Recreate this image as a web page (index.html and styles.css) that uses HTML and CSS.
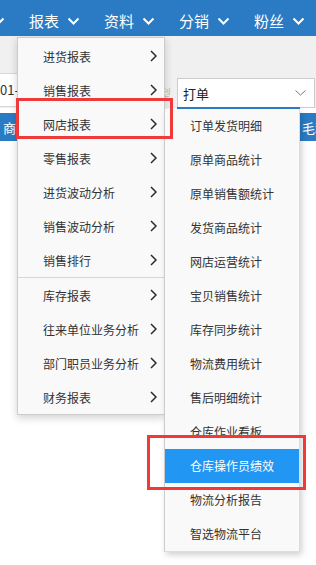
FILE: index.html
```html
<!DOCTYPE html>
<html lang="zh-CN">
<head>
    <meta charset="UTF-8">
    <meta name="viewport" content="width=device-width, initial-scale=1.0">
    <title>报表</title>
    <link rel="stylesheet" href="styles.css">
</head>
<body>

<!-- Top navigation -->
<div class="topbar">
    <ul class="nav">
        <li class="nav-item">统计<svg width="13" height="8" viewBox="0 0 13 8"><polyline points="1.5,1.5 6.5,6.5 11.5,1.5" /></svg></li>
        <li class="nav-item">报表<svg width="13" height="8" viewBox="0 0 13 8"><polyline points="1.5,1.5 6.5,6.5 11.5,1.5" /></svg></li>
        <li class="nav-item">资料<svg width="13" height="8" viewBox="0 0 13 8"><polyline points="1.5,1.5 6.5,6.5 11.5,1.5" /></svg></li>
        <li class="nav-item">分销<svg width="13" height="8" viewBox="0 0 13 8"><polyline points="1.5,1.5 6.5,6.5 11.5,1.5" /></svg></li>
        <li class="nav-item">粉丝<svg width="13" height="8" viewBox="0 0 13 8"><polyline points="1.5,1.5 6.5,6.5 11.5,1.5" /></svg></li>
    </ul>
</div>

<div class="toolbar"></div>

<!-- Filter row -->
<div class="filter">
    <div class="date-box">01-01</div>
    <div class="field">
        <span class="field-label">类型</span>
        <div class="select">
            <span>打单</span>
            <svg width="11" height="6" viewBox="0 0 11 6"><polyline points="0.5,0.5 5.5,5 10.5,0.5" /></svg>
        </div>
    </div>
</div>

<!-- Grid -->
<div class="grid-head">
    <span class="col-main">商品名称</span>
    <span class="col-last">毛利</span>
</div>
<div class="grid-body"></div>

<!-- Report menu -->
<div class="menu">
    <div class="menu-item"><span>进货报表</span><svg width="7" height="12" viewBox="0 0 7 12"><polyline points="1,1 6,6 1,11" /></svg></div>
    <div class="menu-item"><span>销售报表</span><svg width="7" height="12" viewBox="0 0 7 12"><polyline points="1,1 6,6 1,11" /></svg></div>
    <div class="menu-item"><span>网店报表</span><svg width="7" height="12" viewBox="0 0 7 12"><polyline points="1,1 6,6 1,11" /></svg></div>
    <div class="menu-item"><span>零售报表</span><svg width="7" height="12" viewBox="0 0 7 12"><polyline points="1,1 6,6 1,11" /></svg></div>
    <div class="menu-item"><span>进货波动分析</span><svg width="7" height="12" viewBox="0 0 7 12"><polyline points="1,1 6,6 1,11" /></svg></div>
    <div class="menu-item"><span>销售波动分析</span><svg width="7" height="12" viewBox="0 0 7 12"><polyline points="1,1 6,6 1,11" /></svg></div>
    <div class="menu-item"><span>销售排行</span><svg width="7" height="12" viewBox="0 0 7 12"><polyline points="1,1 6,6 1,11" /></svg></div>
    <div class="menu-sep"></div>
    <div class="menu-item"><span>库存报表</span><svg width="7" height="12" viewBox="0 0 7 12"><polyline points="1,1 6,6 1,11" /></svg></div>
    <div class="menu-item"><span>往来单位业务分析</span><svg width="7" height="12" viewBox="0 0 7 12"><polyline points="1,1 6,6 1,11" /></svg></div>
    <div class="menu-item"><span>部门职员业务分析</span><svg width="7" height="12" viewBox="0 0 7 12"><polyline points="1,1 6,6 1,11" /></svg></div>
    <div class="menu-item"><span>财务报表</span><svg width="7" height="12" viewBox="0 0 7 12"><polyline points="1,1 6,6 1,11" /></svg></div>
</div>

<!-- 网店报表 submenu -->
<div class="submenu">
    <div class="sub-item">订单发货明细</div>
    <div class="sub-item">原单商品统计</div>
    <div class="sub-item">原单销售额统计</div>
    <div class="sub-item">发货商品统计</div>
    <div class="sub-item">网店运营统计</div>
    <div class="sub-item">宝贝销售统计</div>
    <div class="sub-item">库存同步统计</div>
    <div class="sub-item">物流费用统计</div>
    <div class="sub-item">售后明细统计</div>
    <div class="sub-item">仓库作业看板</div>
    <div class="sub-item active">仓库操作员绩效</div>
    <div class="sub-item">物流分析报告</div>
    <div class="sub-item">智选物流平台</div>
</div>

<!-- Highlight marks -->
<div class="mark mark-menu"></div>
<div class="mark mark-sub"></div>

</body>
</html>
```

FILE: styles.css
```css
body {
    margin: 0;
    width: 316px;
    height: 565px;
    overflow: hidden;
    position: relative;
    font-family: "Noto Sans CJK SC", "Noto Sans", sans-serif;
    background-color: #fff;
}

/* top navigation */
.topbar {
    height: 36px;
    background-color: #2a7bc4;
    overflow: hidden;
}

.nav {
    list-style: none;
    margin: 0 0 0 -46px;
    padding: 4px 0 0 0;
    height: 32px;
    display: flex;
    align-items: center;
    white-space: nowrap;
}

.nav-item {
    flex: 0 0 75px;
    display: flex;
    align-items: center;
    color: #fff;
    font-size: 15px;
}

.nav-item svg {
    margin: 2px 0 0 8px;
    fill: none;
    stroke: #fff;
    stroke-width: 2;
}

.toolbar {
    height: 37px;
    background-color: #f0f0f0;
}

/* filter row */
.filter {
    height: 35px;
    display: flex;
    align-items: flex-start;
    justify-content: space-between;
    background-color: #f0f0f0;
    padding-right: 1px;
}

.date-box {
    width: 80px;
    height: 34px;
    box-sizing: border-box;
    border-top: 1px solid #d8d8d8;
    border-bottom: 1px solid #d8d8d8;
    background-color: #fff;
    font-size: 13px;
    line-height: 32px;
    color: #333;
}

.field {
    display: flex;
    align-items: center;
    padding-top: 5px;
}

.field-label {
    font-size: 12px;
    color: #bbb;
    margin-right: 6px;
}

.select {
    width: 138px;
    height: 30px;
    box-sizing: border-box;
    border: 1px solid #ccc;
    background-color: #fff;
    display: flex;
    align-items: center;
    justify-content: space-between;
    padding: 0 8px 0 5px;
    font-size: 13px;
    color: #222;
}

.select svg {
    fill: none;
    stroke: #777;
    stroke-width: 1;
}

/* grid */
.grid-head {
    margin-top: 5px;
    height: 28px;
    display: flex;
    align-items: center;
    background-color: #2a7bc4;
    color: #fff;
    font-size: 13px;
    padding-left: 3px;
}

.col-main {
    flex: 1;
}

.col-last {
    flex: 0 0 14px;
    overflow: hidden;
    white-space: nowrap;
}

/* report menu */
.menu {
    position: absolute;
    left: 17px;
    top: 37px;
    width: 146px;
    padding-top: 1px;
    background-color: #f9f9f9;
    border: 1px solid #ccc;
    box-shadow: 0 3px 8px rgba(0, 0, 0, 0.18);
}

.menu-item {
    height: 34px;
    display: flex;
    align-items: center;
    justify-content: space-between;
    padding: 0 7px 0 25px;
    font-size: 12px;
    color: #333;
}

.menu-item svg {
    fill: none;
    stroke: #2b2b2b;
    stroke-width: 1.5;
}

.menu-sep {
    height: 1px;
    background-color: #d6d6d6;
}

/* submenu */
.submenu {
    position: absolute;
    left: 164px;
    top: 109px;
    width: 134px;
    background-color: #f9f9f9;
    border-left: 1px solid #ccc;
    border-right: 1px solid #ddd;
    border-bottom: 1px solid #ddd;
    box-shadow: 2px 3px 6px rgba(0, 0, 0, 0.18);
}

.submenu::before {
    content: "";
    position: absolute;
    left: 12px;
    right: -1px;
    top: -2px;
    height: 2px;
    background-color: #2a7bc4;
}

.sub-item {
    height: 34px;
    line-height: 34px;
    padding-left: 25px;
    font-size: 12px;
    color: #333;
}

.sub-item.active {
    background-color: #2196f3;
    color: #fff;
}

/* red highlight marks */
.mark {
    position: absolute;
    border: 3px solid #f03a3a;
}

.mark-menu {
    left: 16px;
    top: 98px;
    width: 151px;
    height: 35px;
}

.mark-sub {
    left: 147px;
    top: 435px;
    width: 153px;
    height: 49px;
}
```
